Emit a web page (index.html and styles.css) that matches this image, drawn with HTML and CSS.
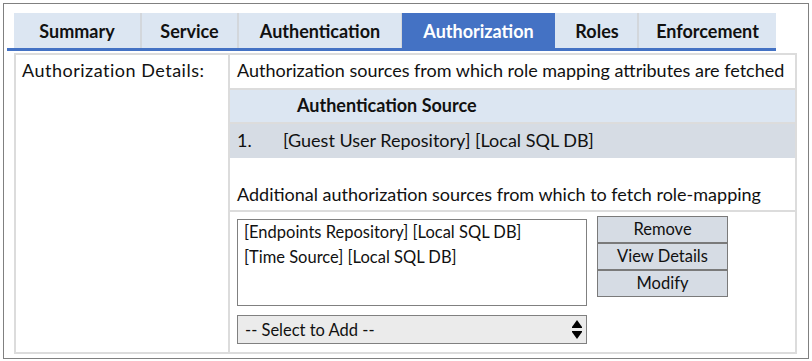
FILE: index.html
```html
<!DOCTYPE html>
<html>
<head>
<meta name="viewport" content="width=device-width, initial-scale=1.0">
<title>Enforcement Policy - Authorization</title>
<link rel="stylesheet" href="styles.css">
</head>
<body>

<div class="frame">
  <div class="tabs">
    <div class="tab tab-summary">Summary</div>
    <div class="tab tab-service">Service</div>
    <div class="tab tab-authn">Authentication</div>
    <div class="tab tab-authz active">Authorization</div>
    <div class="tab tab-roles">Roles</div>
    <div class="tab tab-enf">Enforcement</div>
  </div>

  <div class="policy">
    <div class="label-cell">Authorization Details:</div>
    <div class="detail-cell">
      <div class="row intro">Authorization sources from which role mapping attributes are fetched</div>
      <div class="row head">Authentication Source</div>
      <div class="row source"><span class="num">1.</span>[Guest User Repository] [Local SQL DB]</div>
      <div class="row extra">Additional authorization sources from which to fetch role-mapping</div>
      <div class="row editor">
        <div class="listbox">
          <div class="item">[Endpoints Repository] [Local SQL DB]</div>
          <div class="item">[Time Source] [Local SQL DB]</div>
        </div>
        <div class="actions">
          <button class="btn" type="button">Remove</button>
          <button class="btn" type="button">View Details</button>
          <button class="btn" type="button">Modify</button>
        </div>
        <div class="picker">
          <span>-- Select to Add --</span>
          <svg class="arrows" width="10" height="19" viewBox="0 0 10 19">
            <polygon points="5,0 10,7 10,8 0,8 0,7" fill="#000"/>
            <polygon points="0,11 10,11 10,12 5,19 0,12" fill="#000"/>
          </svg>
        </div>
      </div>
    </div>
  </div>
</div>

</body>
</html>
```

FILE: styles.css
```css
body {
  margin: 0;
  font-family: Lato, "Liberation Sans", Sans-serif;
  color: #111;
}

.frame {
  box-sizing: border-box;
  margin: 3px;
  width: 806px;
  height: 356px;
  border: 1px solid #808080;
}

/* tab strip */
.tabs {
  display: flex;
  box-sizing: border-box;
  width: 769px;
  margin: 9px 0 0 3px;
  padding-left: 7px;
  border-bottom: 3px solid #4472c4;
}

.tab {
  box-sizing: border-box;
  height: 35px;
  display: flex;
  align-items: center;
  justify-content: center;
  background-color: #dce6f2;
  border-right: 2px solid #d3d7dc;
  font-size: 18px;
  font-weight: bold;
  color: #111;
}

.tab-summary { width: 128px; }
.tab-service { width: 97px; }
.tab-authn { width: 163px; border-right-width: 1px; }
.tab-authz { width: 155px; }
.tab-roles { width: 82px; }
.tab-enf { width: 137px; border-right: none; }

.tab.active {
  background-color: #4472c4;
  border-right-color: #dce6f2;
  color: #fff;
}

/* details table */
.policy {
  display: flex;
  width: 783px;
  height: 301px;
  margin: 2px 0 0 10px;
  font-size: 18px;
}

.label-cell {
  box-sizing: border-box;
  width: 216px;
  padding: 4px 6px;
  border: 2px solid #dcdcdc;
  letter-spacing: 0.5px;
}

.detail-cell {
  flex: 1;
  display: flex;
  flex-direction: column;
  border: 2px solid #dcdcdc;
  border-left: none;
}

.row {
  box-sizing: border-box;
  padding-left: 7px;
}

.intro {
  height: 35px;
  padding-top: 4px;
  border-bottom: 2px solid #dcdcdc;
}

.head {
  height: 34px;
  padding: 4px 0 0 67px;
  background-color: #dce6f2;
  border-bottom: 2px solid #dcdcdc;
  font-weight: bold;
}

.source {
  height: 34px;
  padding-top: 5px;
  background-color: #d6dce4;
}

.num {
  display: inline-block;
  width: 46px;
}

.extra {
  height: 54px;
  padding-top: 25px;
  border-bottom: 2px solid #dcdcdc;
}

.editor {
  flex: 1;
  display: grid;
  grid-template-columns: 350px 131px;
  column-gap: 10px;
  align-items: start;
  align-content: start;
  padding-top: 4px;
}

.listbox {
  box-sizing: border-box;
  height: 87px;
  margin-top: 3px;
  padding: 0 6px;
  border: 1px solid #808080;
  font-size: 16.5px;
  line-height: 25px;
}

.actions {
  display: flex;
  flex-direction: column;
}

.btn {
  height: 27px;
  padding: 0 0 2px;
  background-color: #d6dce4;
  border: 1px solid #7a7a7a;
  font-family: Lato, "Liberation Sans", Sans-serif;
  font-size: 16.5px;
  color: #111;
  cursor: pointer;
}

.picker {
  box-sizing: border-box;
  height: 29px;
  margin-top: 9px;
  padding: 0 4px 0 7px;
  display: flex;
  align-items: center;
  justify-content: space-between;
  background-color: #ebebeb;
  border: 1px solid #808080;
  font-size: 16.5px;
}
```
